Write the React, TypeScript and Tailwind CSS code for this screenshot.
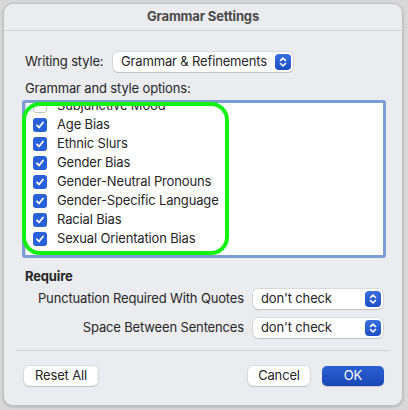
import React from 'react';

const items = [
  'Subjunctive Mood',
  'Age Bias',
  'Ethnic Slurs',
  'Gender Bias',
  'Gender-Neutral Pronouns',
  'Gender-Specific Language',
  'Racial Bias',
  'Sexual Orientation Bias',
  'Possessive with Gerunds',
];

const Stepper: React.FC = () => (
  <div className="w-[16px] h-[16px] rounded-[4px] bg-gradient-to-b from-[#3a6fe0] to-[#1c4fc4] flex items-center justify-center">
    <svg width="8" height="12" viewBox="0 0 8 12" fill="none" stroke="white" strokeWidth="1.6" strokeLinecap="round" strokeLinejoin="round">
      <path d="M1.5 4.5L4 2l2.5 2.5" />
      <path d="M1.5 7.5L4 10l2.5-2.5" />
    </svg>
  </div>
);

const Popup: React.FC<{ label: string; width: string }> = ({ label, width }) => (
  <div
    className={`${width} h-[20px] bg-white rounded-[5px] shadow-[0_0_0_0.5px_rgba(0,0,0,0.15),0_1px_1px_rgba(0,0,0,0.12)] flex items-center justify-between pl-[8px] pr-[2px]`}
  >
    <span className="text-[13px] text-[#262626]">{label}</span>
    <Stepper />
  </div>
);

const Checkbox: React.FC<{ checked: boolean }> = ({ checked }) =>
  checked ? (
    <div className="w-[14px] h-[14px] rounded-[3px] bg-[#2760d8] flex items-center justify-center">
      <svg width="10" height="10" viewBox="0 0 10 10" fill="none" stroke="white" strokeWidth="1.8" strokeLinecap="round" strokeLinejoin="round">
        <path d="M2 5.3l2 2.2L8 2.5" />
      </svg>
    </div>
  ) : (
    <div className="w-[14px] h-[14px] rounded-[3px] bg-white border border-[#c4c4c4]" />
  );

const Button: React.FC<{ label: string; width: string; primary?: boolean }> = ({ label, width, primary }) => (
  <div
    className={`${width} h-[20px] rounded-[5px] flex items-center justify-center text-[13px] ${
      primary
        ? 'bg-gradient-to-b from-[#2b5fd2] to-[#1a47b6] text-white shadow-[0_1px_1px_rgba(0,0,0,0.15)]'
        : 'bg-white text-[#262626] shadow-[0_0_0_0.5px_rgba(0,0,0,0.15),0_1px_1px_rgba(0,0,0,0.12)]'
    }`}
  >
    {label}
  </div>
);

const App: React.FC = () => {
  return (
    <div
      className="w-[408px] h-[410px] bg-[#d8d8d8] pt-[3px] pl-[3px] pr-[5px] pb-[4px] tracking-[-0.15px]"
      style={{ fontFamily: 'Inter, "Liberation Sans", sans-serif' }}
    >
      <div className="relative w-full h-full rounded-[10px] bg-[#eaecef] border border-[#c2c2c2] shadow-[0_1px_3px_rgba(0,0,0,0.2)] flex flex-col overflow-hidden">
        <div className="h-[27px] shrink-0 flex items-center justify-center border-b border-[#d2d4d7] text-[13px] font-bold text-[#4a4a4a]">
          Grammar Settings
        </div>

        <div className="flex flex-col pl-[21px] pr-[16px]">
          <div className="flex items-center mt-[21px] h-[20px]">
            <span className="text-[13px] text-[#262626] w-[88px]">Writing style:</span>
            <Popup label="Grammar & Refinements" width="w-[180px]" />
          </div>

          <div className="mt-[7px] text-[13px] text-[#262626] leading-[18px]">Grammar and style options:</div>

          <div className="mt-[3px] -ml-[3px] w-[364px] h-[158px] border-[3px] border-[#7a9dd3] rounded-[3px] bg-white overflow-hidden">
            <div className="h-full border-l border-[#d4d4d4] overflow-hidden">
              <div className="-mt-[7px] flex flex-col">
                {items.map((item, i) => (
                  <div key={item} className="h-[19px] flex items-center pl-[7px]">
                    <Checkbox checked={i > 0 && i < items.length - 1} />
                    <span className="ml-[10px] text-[13px] text-[#262626]">{item}</span>
                  </div>
                ))}
              </div>
            </div>
          </div>

          <div className="mt-[10px] text-[13px] font-bold text-[#262626] leading-[16px]">Require</div>

          <div className="mt-[5px] flex flex-col gap-[9px]">
            <div className="flex items-center justify-end pr-[3px]">
              <span className="text-[13px] text-[#262626] mr-[9px]">Punctuation Required With Quotes</span>
              <Popup label="don't check" width="w-[130px]" />
            </div>
            <div className="flex items-center justify-end pr-[3px]">
              <span className="text-[13px] text-[#262626] mr-[9px]">Space Between Sentences</span>
              <Popup label="don't check" width="w-[130px]" />
            </div>
          </div>
        </div>

        <div className="mx-[12px] mt-[12px] border-t border-[#d2d4d7]" />

        <div className="flex items-center justify-between mt-[15px] pl-[20px] pr-[18px]">
          <Button label="Reset All" width="w-[74px]" />
          <div className="flex gap-[12px]">
            <Button label="Cancel" width="w-[62px]" />
            <Button label="OK" width="w-[62px]" primary />
          </div>
        </div>

        <div className="absolute left-[18px] top-[98px] w-[207px] h-[153px] rounded-[18px] border-[4px] border-[#11f20e] pointer-events-none" />
      </div>
    </div>
  );
};

export default App;
